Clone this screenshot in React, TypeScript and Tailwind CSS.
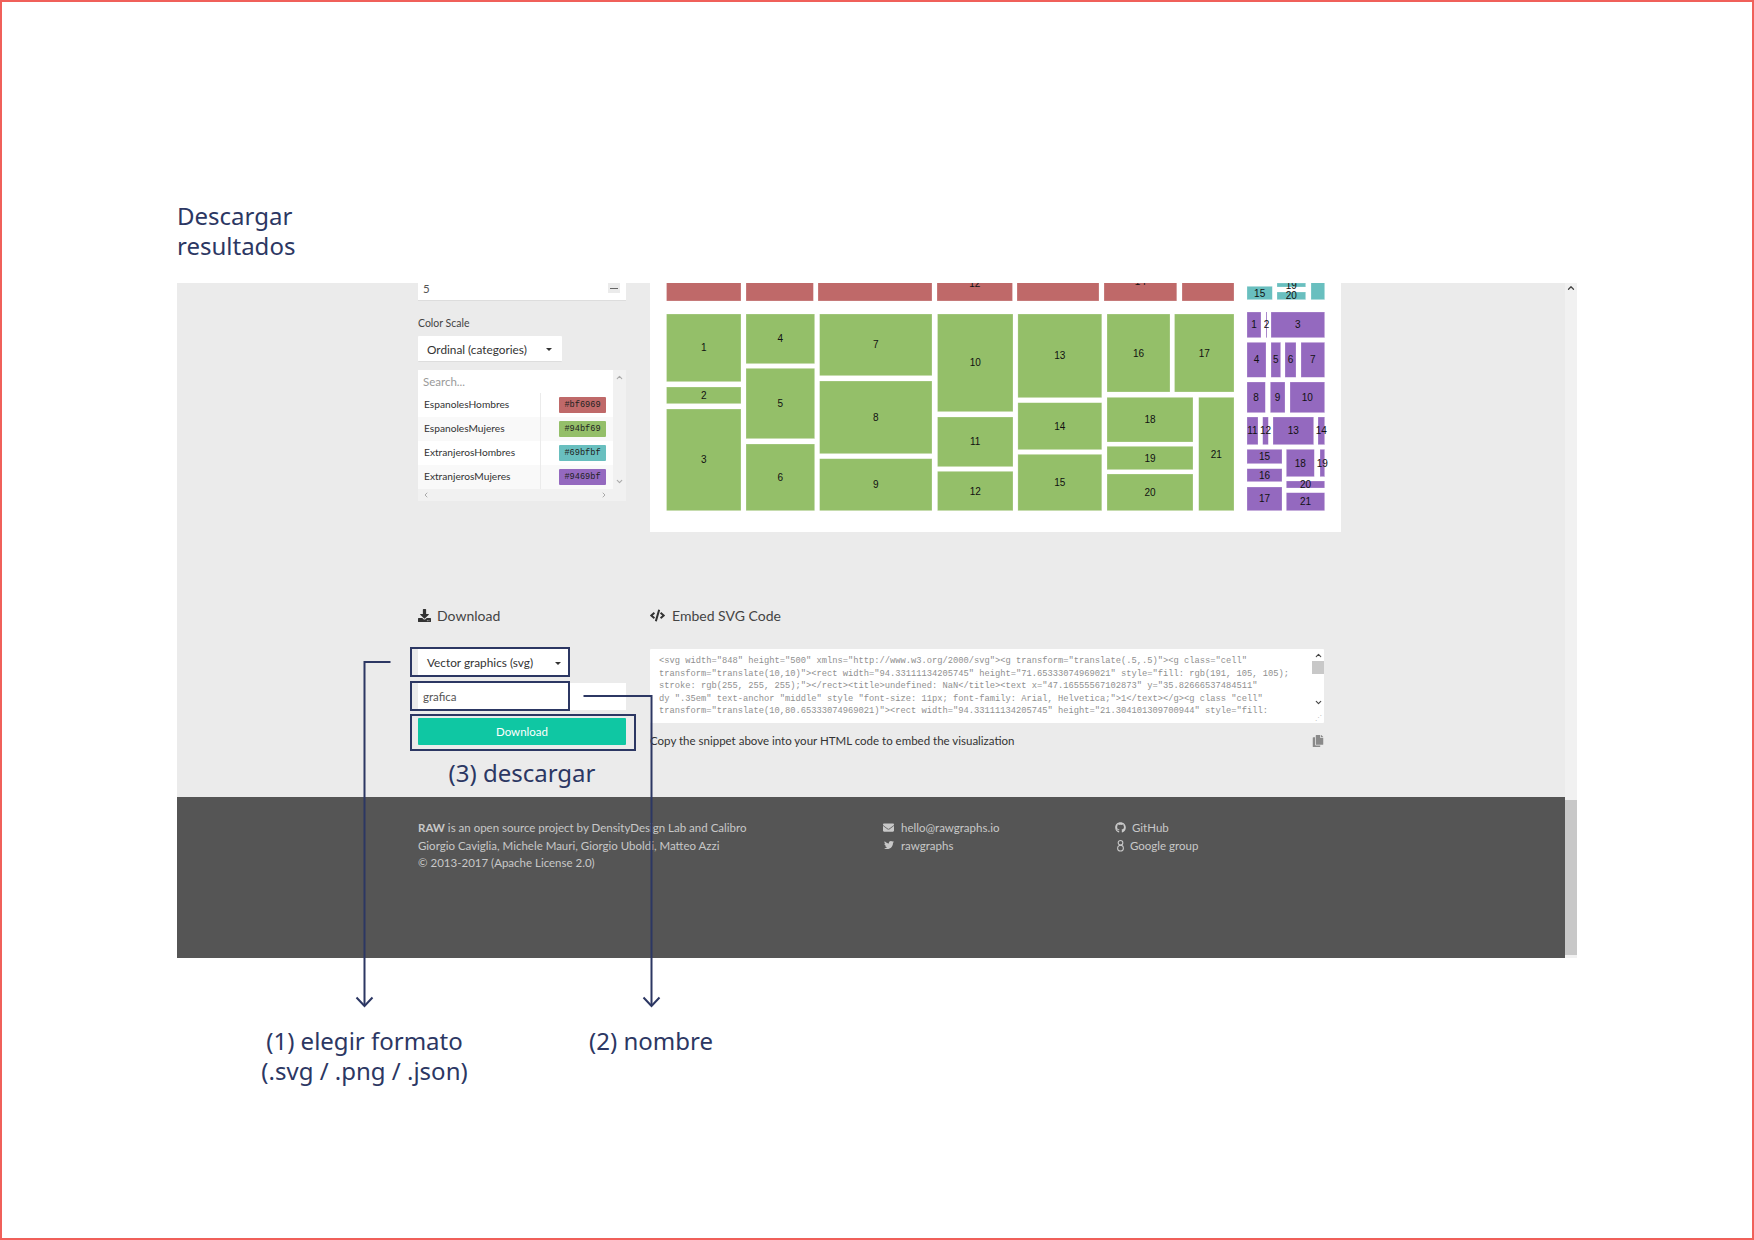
import { ChevronDown, ChevronLeft, ChevronRight, ChevronUp } from 'lucide-react';
import { FaCode, FaCopy, FaDownload, FaEnvelope, FaGithub, FaTwitter } from 'react-icons/fa';

type Cell = [label: string, x0: number, y0: number, x1: number, y1: number];

const RED: Cell[] = [
  ['', 666.5, 270, 741, 301],
  ['', 746, 270, 813.4, 301],
  ['', 818, 270, 932, 301],
  ['12', 937, 265, 1012.5, 301],
  ['', 1017, 270, 1099, 301],
  ['14', 1104, 261, 1176.8, 301],
  ['', 1182, 270, 1234, 301],
];

const GREEN: Cell[] = [
  ['1', 666.5, 314, 741, 381.7],
  ['2', 666.5, 387, 741, 403.7],
  ['3', 666.5, 409, 741, 510.7],
  ['4', 746, 314, 814.7, 363.7],
  ['5', 746, 368.3, 814.7, 438.7],
  ['6', 746, 444, 814.7, 510.7],
  ['7', 819.6, 314, 932, 375.7],
  ['8', 819.6, 381, 932, 453.7],
  ['9', 819.6, 458.7, 932, 510.7],
  ['10', 937.5, 314, 1013, 411.7],
  ['11', 937.5, 417, 1013, 466.7],
  ['12', 937.5, 471.3, 1013, 510.7],
  ['13', 1017.9, 314, 1101.8, 397.7],
  ['14', 1017.9, 402.7, 1101.8, 449.7],
  ['15', 1017.9, 454.3, 1101.8, 510.7],
  ['16', 1107, 314, 1170, 392],
  ['17', 1174.5, 314, 1234, 392],
  ['18', 1107, 397.3, 1193, 442],
  ['19', 1107, 446.3, 1193, 469.7],
  ['20', 1107, 474, 1193, 510.7],
  ['21', 1198.7, 397.3, 1234, 510.7],
];

const TEAL: Cell[] = [
  ['15', 1247, 286.3, 1272.3, 299.7],
  ['19', 1277, 283, 1305.7, 287],
  ['20', 1277, 292, 1305.7, 299.7],
  ['', 1311, 270, 1324.7, 299.7],
];

const PURPLE: Cell[] = [
  ['1', 1247, 312, 1261, 337.7],
  ['2', 1266, 312, 1267, 337.7],
  ['3', 1271, 312, 1324.7, 337.7],
  ['4', 1247, 342.3, 1266, 377.3],
  ['5', 1271, 342.3, 1280.7, 377.3],
  ['6', 1285, 342.3, 1296, 377.3],
  ['7', 1301, 342.3, 1324.7, 377.3],
  ['8', 1247, 382, 1265.3, 412.7],
  ['9', 1270.3, 382, 1285, 412.7],
  ['10', 1290, 382, 1324.7, 412.7],
  ['11', 1247, 417, 1258, 444.7],
  ['12', 1262.7, 417, 1268.3, 444.7],
  ['13', 1273, 417, 1313.7, 444.7],
  ['14', 1318, 417, 1324.7, 444.7],
  ['15', 1247, 449.3, 1282, 463.7],
  ['16', 1247, 468.7, 1282, 481.7],
  ['17', 1247, 487, 1282, 510.7],
  ['18', 1286.3, 449.3, 1314.3, 476.7],
  ['19', 1320, 449.3, 1324.7, 476.7],
  ['20', 1286.3, 481, 1324.7, 488],
  ['21', 1286.3, 492.7, 1324.7, 510.7],
];

const GROUPS: [string, Cell[]][] = [
  ['#bf6969', RED],
  ['#94bf69', GREEN],
  ['#69bfbf', TEAL],
  ['#9469bf', PURPLE],
];

const SCALE = [
  ['EspanolesHombres', '#bf6969'],
  ['EspanolesMujeres', '#94bf69'],
  ['ExtranjerosHombres', '#69bfbf'],
  ['ExtranjerosMujeres', '#9469bf'],
];

const EMBED_CODE = `<svg width="848" height="500" xmlns="http://www.w3.org/2000/svg"><g transform="translate(.5,.5)"><g class="cell"
transform="translate(10,10)"><rect width="94.33111134205745" height="71.65333074969021" style="fill: rgb(191, 105, 105);
stroke: rgb(255, 255, 255);"></rect><title>undefined: NaN</title><text x="47.16555567102873" y="35.82666537484511"
dy ".35em" text-anchor "middle" style "font-size: 11px; font-family: Arial, Helvetica;">1</text></g><g class "cell"
transform="translate(10,80.65333074969021)"><rect width="94.33111134205745" height="21.304101309700944" style="fill:`;

const Caret = () => (
  <span className="h-0 w-0 border-x-[3px] border-t-[3px] border-x-transparent border-t-[#333]" />
);

const Treemap = () => (
  <svg viewBox="650 283 691 249" className="block h-[249px] w-[691px]">
    {GROUPS.map(([fill, cells]) =>
      cells.map(([label, x0, y0, x1, y1]) => (
        <g key={fill + label + x0 + y0}>
          <rect x={x0} y={y0} width={x1 - x0} height={y1 - y0} fill={fill} stroke="#fff" strokeOpacity={0.4} strokeWidth={0.6} />
          <text
            x={(x0 + x1) / 2}
            y={(y0 + y1) / 2}
            dy=".35em"
            textAnchor="middle"
            fill="#111"
            fontSize="10"
            fontFamily="'Liberation Sans', Arial, sans-serif"
          >
            {label}
          </text>
        </g>
      )),
    )}
  </svg>
);

const ColorTable = () => (
  <div className="mt-2 flex h-[131px] flex-col bg-[#f1f1f1]">
    <div className="flex h-[119px]">
      <div className="w-[195px]">
        <div className="flex h-[23px] items-center bg-white pl-[5px] text-[11.5px] text-[#9a9a9a]">Search...</div>
        {SCALE.map(([name, color], i) => (
          <div key={name} className={`flex h-[24px] ${i % 2 === 1 ? 'bg-[#f9f9f9]' : 'bg-white'}`}>
            <div className="flex w-[123px] items-center border-r border-[#ebebeb] pb-[1px] pl-[6px] text-[10.2px] text-[#333]">
              {name}
            </div>
            <div className="flex flex-1 items-center justify-end pr-[7px]">
              <span
                className="flex h-[16px] w-[47px] items-center justify-center rounded-[1px] font-['Liberation_Mono',monospace] text-[8.6px] text-[#222]"
                style={{ backgroundColor: color }}
              >
                {color}
              </span>
            </div>
          </div>
        ))}
      </div>
      <div className="flex flex-1 flex-col items-center justify-between py-[3px] text-[#aaa]">
        <ChevronUp size={9} strokeWidth={3} />
        <ChevronDown size={9} strokeWidth={3} />
      </div>
    </div>
    <div className="flex h-[12px] items-center justify-between px-[4px] text-[#aaa]">
      <ChevronLeft size={8} strokeWidth={3} />
      <ChevronRight size={8} strokeWidth={3} className="mr-[14px]" />
    </div>
  </div>
);

const ExportColumn = () => (
  <div>
    <h4 className="flex h-[20px] items-center gap-[6px] text-[14px] text-[#444]">
      <FaDownload size={13} className="text-[#333]" />
      Download
    </h4>
    <div className="mt-6 flex h-[26px] w-[151px] items-center justify-between bg-white pt-[2px] pr-[8px] pl-[9px] text-[11.8px] text-[#333]">
      Vector graphics (svg)
      <Caret />
    </div>
    <div className="mt-2 flex h-[27px] items-center bg-white pl-[5px] text-[11.5px] text-[#555]">grafica</div>
    <button type="button" className="mt-2 block h-[27px] w-full rounded-[1px] bg-[#0fc7a3] text-[11.5px] text-white">
      Download
    </button>
    <div className="mt-3 h-[32px] text-center font-['Noto_Sans',sans-serif] text-[24px] leading-[32px] font-normal text-[#2c3763]">
      (3) descargar
    </div>
  </div>
);

const EmbedColumn = () => (
  <div>
    <h4 className="flex h-[20px] items-center gap-[7px] text-[14px] text-[#444]">
      <FaCode size={15} className="text-[#333]" />
      Embed SVG Code
    </h4>
    <div className="mt-6 flex h-[74px] w-[674px] rounded-[1px] bg-white">
      <pre className="flex-1 overflow-hidden pt-[6px] pl-[9px] font-['Liberation_Mono',monospace] text-[8.75px] leading-[12.6px] text-[#8f8f8f]">
        {EMBED_CODE}
      </pre>
      <div className="flex w-[12px] flex-col items-center pt-[2px] text-[#444]">
        <ChevronUp size={9} strokeWidth={3} />
        <span className="mt-[1px] h-[13px] w-full bg-[#c8c8c8]" />
        <ChevronDown size={9} strokeWidth={3} className="mt-[24px]" />
        <span className="mt-[7px] text-[7px] leading-none text-[#bbb]">⋰</span>
      </div>
    </div>
    <div className="mt-[9px] flex h-[18px] w-[674px] items-center justify-between text-[11.5px] text-[#333]">
      Copy the snippet above into your HTML code to embed the visualization
      <FaCopy size={12} className="text-[#8a8a8a]" />
    </div>
  </div>
);

const GoogleGlyph = () => (
  <svg viewBox="0 0 10 14" className="h-[13px] w-[9px]" fill="none" stroke="#c8c8c8" strokeWidth="1.2">
    <circle cx="5" cy="4" r="2.6" />
    <circle cx="5" cy="10" r="3.2" />
  </svg>
);

const Footer = () => (
  <footer className="grid h-[161px] grid-cols-[465px_232px_1fr] bg-[#555] pt-[22px] pl-[241px] text-[11.5px] leading-[17.5px] text-[#c8c8c8]">
    <div>
      <p>
        <b>RAW</b> is an open source project by DensityDesign Lab and Calibro
      </p>
      <p>Giorgio Caviglia, Michele Mauri, Giorgio Uboldi, Matteo Azzi</p>
      <p>© 2013-2017 (Apache License 2.0)</p>
    </div>
    <div>
      <p className="flex items-center gap-[7px]">
        <FaEnvelope size={11} />
        hello@rawgraphs.io
      </p>
      <p className="flex items-center gap-[7px] pl-[1px]">
        <FaTwitter size={10} />
        rawgraphs
      </p>
    </div>
    <div>
      <p className="flex items-center gap-[6px]">
        <FaGithub size={11} />
        GitHub
      </p>
      <p className="flex items-center gap-[5px] pl-[1px]">
        <GoogleGlyph />
        Google group
      </p>
    </div>
  </footer>
);

const Callouts = () => (
  <svg viewBox="0 0 1754 1240" className="pointer-events-none absolute top-0 left-0 h-[1240px] w-[1754px]" fill="none" stroke="#2c3763" strokeWidth="2">
    <rect x="411" y="648" width="158" height="28" />
    <rect x="411" y="682" width="158" height="28" />
    <rect x="411" y="715" width="224" height="35" />
    <path d="M390.5 662H364.5V1006" />
    <path d="M356.5 997.5L364.5 1006L372.5 997.5" />
    <path d="M583.5 696H651.5V1006" />
    <path d="M643.5 997.5L651.5 1006L659.5 997.5" />
  </svg>
);

export default function App() {
  return (
    <div className="relative h-[1240px] w-[1754px] overflow-hidden bg-white pt-[201px] pl-[177px] font-['Lato',sans-serif] shadow-[inset_0_0_0_2px_#f0605a]">
      <h2 className="mb-[22px] w-[200px] font-['Noto_Sans',sans-serif] text-[24px] leading-[30px] font-normal text-[#2c3763]">
        Descargar resultados
      </h2>

      <section className="flex h-[675px] w-[1400px]">
        <div className="flex w-[1388px] flex-col bg-[#ebebeb]">
          <div className="flex-1 pl-[241px]">
            <div className="grid grid-cols-[208px_691px] gap-x-6">
              <div>
                <div className="flex h-[18px] items-start justify-between border-b border-[#ddd] bg-white pr-[6px] pl-[5px] text-[11.5px] leading-[11px] text-[#555]">
                  5
                  <span className="flex h-[10px] w-[12px] flex-col items-center justify-center bg-[#ebebeb]">
                    <span className="h-px w-[8px] bg-[#666]" />
                  </span>
                </div>
                <div className="mt-[14px] h-4 text-[10.5px] leading-4 text-[#444]">Color Scale</div>
                <div className="mt-[5px] flex h-[26px] w-[144px] items-center justify-between rounded-[1px] border-b border-[#ddd] bg-white pt-[2px] pr-[10px] pl-[9px] text-[11.8px] text-[#333]">
                  Ordinal (categories)
                  <Caret />
                </div>
                <ColorTable />
              </div>
              <div className="h-[249px] bg-white">
                <Treemap />
              </div>
            </div>
            <div className="mt-[73px] grid grid-cols-[208px_691px] gap-x-6">
              <ExportColumn />
              <EmbedColumn />
            </div>
          </div>
          <Footer />
        </div>
        <div className="flex w-[12px] flex-col items-center bg-[#f1f1f1]">
          <ChevronUp size={10} strokeWidth={3} className="text-[#444]" />
          <span className="mt-auto mb-[3px] h-[155px] w-full bg-[#c8c8c8]" />
        </div>
      </section>

      <div className="mt-[68px] flex font-['Noto_Sans',sans-serif] text-[24px] leading-[30px] font-normal text-[#2c3763]">
        <div className="ml-[37.5px] w-[300px] text-center">
          (1) elegir formato
          <br />
          (.svg / .png / .json)
        </div>
        <div className="ml-[36.5px] w-[200px] text-center">(2) nombre</div>
      </div>

      <Callouts />
    </div>
  );
}
